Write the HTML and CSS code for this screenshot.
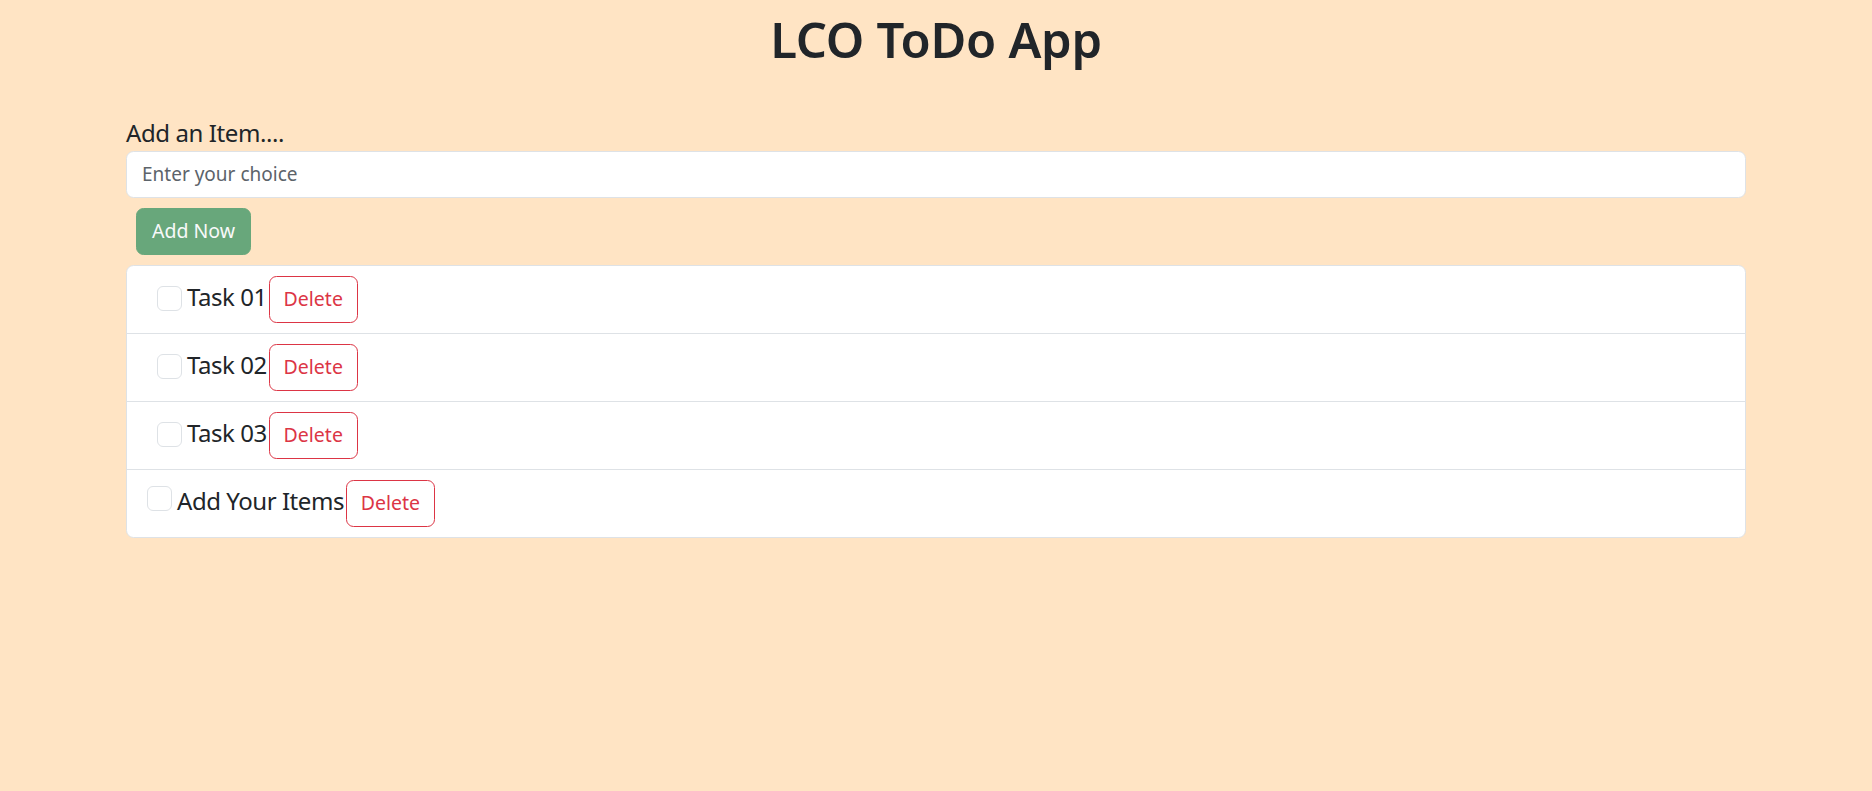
FILE: index.html
```html
<!DOCTYPE html>
<html lang="en">
<head>
<meta charset="utf-8">
<title>LCO ToDo App</title>
<link rel="stylesheet" href="styles.css">
</head>
<body>
  <h1 class="title">LCO ToDo App</h1>
  <div class="container">
    <label class="item-label" for="item">Add an Item....</label>
    <input class="item-input" id="item" type="text" placeholder="Enter your choice">
    <button class="btn-add" type="button">Add Now</button>
    <ul class="todo-list">
      <li class="todo-row">
        <input class="check check-indent" type="checkbox">
        <span class="todo-text">Task 01</span>
        <button class="btn-delete" type="button">Delete</button>
      </li>
      <li class="todo-row">
        <input class="check check-indent" type="checkbox">
        <span class="todo-text">Task 02</span>
        <button class="btn-delete" type="button">Delete</button>
      </li>
      <li class="todo-row">
        <input class="check check-indent" type="checkbox">
        <span class="todo-text">Task 03</span>
        <button class="btn-delete" type="button">Delete</button>
      </li>
      <li class="todo-row">
        <input class="check check-plain" type="checkbox">
        <span class="todo-text">Add Your Items</span>
        <button class="btn-delete" type="button">Delete</button>
      </li>
    </ul>
  </div>
</body>
</html>
```

FILE: styles.css
```css
* {
  box-sizing: border-box;
}

html, body {
  margin: 0;
  padding: 0;
}

body {
  background: #ffe4c4;
  color: #212529;
  font-family: "Noto Sans", "Open Sans", sans-serif;
  font-size: 20px;
  line-height: 1.5;
}

.title {
  margin: 10px 0 10px;
  font-size: 49px;
  font-weight: 600;
  line-height: 1.2;
  letter-spacing: -0.3px;
  text-align: center;
  color: #212529;
}

.container {
  width: 1650px;
  margin: 0 auto;
  padding: 39px 15px 0;
}

.item-label {
  display: block;
  font-size: 24px;
  line-height: 30px;
  height: 30px;
  letter-spacing: -0.4px;
}

.item-input {
  display: block;
  width: 100%;
  height: 47px;
  margin-top: 3px;
  padding: 0 15px;
  font-family: inherit;
  font-size: 19px;
  color: #212529;
  background: #fff;
  border: 1px solid #dee2e6;
  border-radius: 7.5px;
  outline: none;
}

.item-input::placeholder {
  color: #5c636a;
}

.btn-add {
  display: block;
  margin: 10px;
  width: 115px;
  height: 47px;
  padding: 0;
  font-family: inherit;
  font-size: 19.5px;
  line-height: 30px;
  color: #f8f9fa;
  background: #68a77b;
  border: 1px solid #68a77b;
  border-radius: 7.5px;
}

.todo-list {
  list-style: none;
  margin: 0;
  padding: 0;
  background: #fff;
  border: 1px solid #dee2e6;
  border-radius: 7.5px;
}

.todo-row {
  display: flex;
  align-items: baseline;
  height: 68px;
  padding: 10px 20px;
  font-size: 24px;
  line-height: 1.5;
}

.todo-row + .todo-row {
  border-top: 1px solid #dee2e6;
}

.todo-row:first-child {
  height: 67px;
}

.check {
  appearance: none;
  -webkit-appearance: none;
  flex: none;
  align-self: flex-start;
  width: 25px;
  height: 25px;
  margin: 0 5px 0 0;
  background: #fff;
  border: 1px solid #dee2e6;
  border-radius: 6px;
}

.check-indent {
  margin-left: 10px;
  margin-top: 10px;
}

.check-plain {
  margin-top: 6px;
}

.todo-text {
  color: #212529;
  letter-spacing: -0.45px;
}

.btn-delete {
  flex: none;
  width: 89px;
  height: 47px;
  margin-left: 2px;
  padding: 0;
  font-family: inherit;
  font-size: 19.5px;
  line-height: 30px;
  color: #dc3545;
  background: transparent;
  border: 1px solid #dc3545;
  border-radius: 7.5px;
}
```
